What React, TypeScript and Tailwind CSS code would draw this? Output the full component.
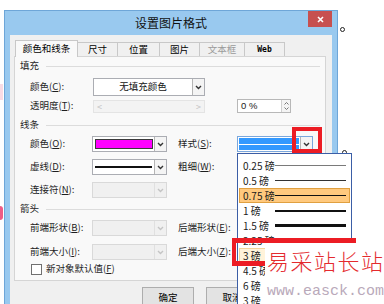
import React from 'react';

const FONT = "font-['Noto_Sans_CJK_SC',sans-serif]";

function Chev({ color = '#222' }: { color?: string }) {
  return (
    <svg width="7" height="5" viewBox="0 0 7 5">
      <path d="M1 1l2.5 2.5L6 1" fill="none" stroke={color} strokeWidth="1.4" />
    </svg>
  );
}

// label with underlined access key, e.g. 颜色(C):
function Lbl({ t, k, w, gray }: { t: string; k: string; w: string; gray?: boolean }) {
  return (
    <span className={`${w} shrink-0 whitespace-nowrap ${gray ? 'text-[#8a8a8a]' : 'text-[#1e1e1e]'}`}>
      {t}(<span className="underline">{k}</span>):
    </span>
  );
}

function Header({ t, mt }: { t: string; mt: string }) {
  return (
    <div className={`${mt} h-[14px] flex items-center pl-[5px] pr-[5px]`}>
      <span className="text-[#1e1e1e]">{t}</span>
      <div className="ml-[7px] flex-1 h-px bg-[#dcdcdc]" />
    </div>
  );
}

function ArrowBtn({ disabled }: { disabled?: boolean }) {
  return (
    <div
      className={`w-[12px] h-full border-l flex items-center justify-center ${
        disabled ? 'border-[#e0e0e0] bg-[#f0f0f0]' : 'border-[#b5b5b5] bg-[#f4f4f4]'
      }`}
    >
      <Chev color={disabled ? '#c4c4c4' : '#333'} />
    </div>
  );
}

function Disabled({ w }: { w: string }) {
  return (
    <div className={`${w} h-[16px] border border-[#d9d9d9] bg-[#f0f0f0] flex justify-end`}>
      <ArrowBtn disabled />
    </div>
  );
}

const weights = [
  { t: '0.25 磅', h: 'h-px', c: 'bg-[#7a7a7a]' },
  { t: '0.5 磅', h: 'h-px', c: 'bg-[#333]' },
  { t: '0.75 磅', h: 'h-px', c: 'bg-[#111]', sel: true },
  { t: '1 磅', h: 'h-[2px]', c: 'bg-[#111]' },
  { t: '1.5 磅', h: 'h-[3px]', c: 'bg-[#111]' },
  { t: '2.25 磅', h: 'h-[3px]', c: 'bg-[#111]' },
  { t: '3 磅', h: 'h-[4px]', c: 'bg-[#111]', cur: true },
  { t: '4.5 磅', h: 'h-[5px]', c: 'bg-[#111]' },
  { t: '6 磅', h: 'h-[6px]', c: 'bg-[#111]' },
  { t: '3 磅', h: 'h-[3px]', c: 'bg-[#111]' },
];

export default function App() {
  return (
    <div className={`${FONT} relative w-[384px] h-[304px] overflow-hidden bg-white text-[9.5px] leading-none`}>
      {/* edge of the picture behind the dialog */}
      <div className="absolute left-0 top-[84px] w-[3px] h-[16px] bg-[#f9dbe4]" />
      <div className="absolute left-0 top-[206px] w-[3px] h-[14px] rounded-r bg-[#ef5c86]" />
      <div className="absolute left-[340px] top-[27px] w-[5px] h-[5px] rounded-full border border-[#222] bg-white" />
      <div className="absolute left-[342px] top-[150px] w-[5px] h-[5px] rounded-full border border-[#222] bg-white" />

      {/* window */}
      <div className="ml-[4px] mt-[10px] w-[334px] h-[300px] bg-[#99c9ef] border border-[#6ea6d8] border-b-0 px-[5px] flex flex-col">
        <div className="relative h-[24px] flex items-center justify-center">
          <span className="text-[12px] text-[#111]">设置图片格式</span>
          <div className="absolute right-0 top-0 w-[24px] h-[16px] bg-[#c75050] flex items-center justify-center">
            <svg width="7" height="7" viewBox="0 0 7 7">
              <path d="M1 1l5 5M6 1l-5 5" stroke="#fff" strokeWidth="1.6" />
            </svg>
          </div>
        </div>

        <div className="flex-1 bg-[#f0f0f0] pl-[4px] pr-[6px] flex flex-col">
          {/* tabs */}
          <div className="mt-[5px] h-[16px] flex items-end">
            <div className="relative z-10 ml-[1px] w-[63px] h-[17px] -mb-px bg-[#f9f9f9] border border-b-0 border-[#c8c8c8] flex items-center justify-center">
              颜色和线条
            </div>
            <div className="w-[40px] h-[14px] border-t border-r border-[#c8c8c8] flex items-center justify-center">尺寸</div>
            <div className="w-[42px] h-[14px] border-t border-r border-[#c8c8c8] flex items-center justify-center">位置</div>
            <div className="w-[40px] h-[14px] border-t border-r border-[#c8c8c8] flex items-center justify-center">图片</div>
            <div className="w-[45px] h-[14px] border-t border-r border-[#c8c8c8] flex items-center justify-center text-[#9a9a9a]">文本框</div>
            <div className="w-[40px] h-[14px] border-t border-r border-[#c8c8c8] flex items-center justify-center font-['DejaVu_Sans_Mono',monospace] font-bold text-[8px]">Web</div>
          </div>

          {/* tab page */}
          <div className="h-[225px] border border-[#d5d5d5] bg-[#f9f9f9] flex flex-col">
            <Header t="填充" mt="mt-[2px]" />
            <div className="mt-[5px] h-[18px] flex items-center pl-[15px]">
              <Lbl t="颜色" k="C" w="w-[63px]" />
              <div className="w-[112px] h-[18px] border border-[#abadb3] bg-white flex">
                <span className="flex-1 flex items-center justify-center text-[#111]">无填充颜色</span>
                <ArrowBtn />
              </div>
            </div>
            <div className="mt-[3px] h-[14px] flex items-center pl-[15px]">
              <Lbl t="透明度" k="T" w="w-[63px]" />
              <div className="w-[112px] h-[13px] border border-[#e4e4e4] bg-[#f3f3f3] flex items-center justify-between px-[3px] text-[#c2c2c2] text-[9px]">
                <span>&lt;</span>
                <span>&gt;</span>
              </div>
              <div className="ml-[32px] w-[54px] h-[14px] border border-[#b8b8b8] bg-white flex">
                <span className="flex-1 flex items-center pl-[3px] text-[#222] font-['Liberation_Sans',sans-serif]">0 %</span>
                <div className="w-[9px] border-l border-[#d0d0d0] bg-[#f4f4f4] flex flex-col items-center justify-center gap-[2px]">
                  <svg width="5" height="3" viewBox="0 0 5 3"><path d="M0.5 2.5L2.5 0.5L4.5 2.5" fill="none" stroke="#777" /></svg>
                  <svg width="5" height="3" viewBox="0 0 5 3"><path d="M0.5 0.5L2.5 2.5L4.5 0.5" fill="none" stroke="#777" /></svg>
                </div>
              </div>
            </div>

            <Header t="线条" mt="mt-[5px]" />
            <div className="mt-[4px] h-[16px] flex items-center pl-[15px]">
              <Lbl t="颜色" k="O" w="w-[62px]" />
              <div className="w-[75px] h-[16px] border border-[#abadb3] bg-white flex">
                <div className="flex-1 p-[2px] pr-[1px]">
                  <div className="w-full h-full bg-[#ff00ff] border border-[#3a3a3a]" />
                </div>
                <ArrowBtn />
              </div>
              <span className="ml-[11px]" />
              <Lbl t="样式" k="S" w="w-[59px]" />
              <div className="w-[76px] h-[16px] border border-[#7aa7dc] bg-white flex">
                <div className="flex-1 p-[1px]">
                  <div className="w-full h-full bg-[#3399ff] flex items-center">
                    <div className="w-full h-px bg-white" />
                  </div>
                </div>
                <ArrowBtn />
              </div>
            </div>
            <div className="mt-[7px] h-[16px] flex items-center pl-[15px]">
              <Lbl t="虚线" k="D" w="w-[62px]" />
              <div className="w-[75px] h-[16px] border border-[#abadb3] bg-white flex">
                <div className="flex-1 flex items-center px-[2px]">
                  <div className="w-full h-[2px] bg-[#111]" />
                </div>
                <ArrowBtn />
              </div>
              <span className="ml-[11px]" />
              <Lbl t="粗细" k="W" w="w-[59px]" />
            </div>
            <div className="mt-[7px] h-[16px] flex items-center pl-[15px]">
              <Lbl t="连接符" k="N" w="w-[62px]" />
              <Disabled w="w-[75px]" />
            </div>

            <Header t="箭头" mt="mt-[4px]" />
            <div className="mt-[4px] h-[16px] flex items-center pl-[15px]">
              <Lbl t="前端形状" k="B" w="w-[62px]" />
              <Disabled w="w-[75px]" />
              <span className="ml-[11px]" />
              <Lbl t="后端形状" k="E" w="w-[59px]" />
              <Disabled w="w-[75px]" />
            </div>
            <div className="mt-[8px] h-[16px] flex items-center pl-[15px]">
              <Lbl t="前端大小" k="I" w="w-[62px]" />
              <Disabled w="w-[75px]" />
              <span className="ml-[11px]" />
              <Lbl t="后端大小" k="Z" w="w-[59px]" />
              <Disabled w="w-[75px]" />
            </div>
            <div className="mt-[3px] h-[12px] flex items-center pl-[16px]">
              <div className="w-[11px] h-[11px] border border-[#707070] bg-white" />
              <span className="ml-[4px] text-[#1e1e1e]">
                新对象默认值(<span className="underline">F</span>)
              </span>
            </div>
          </div>

          {/* buttons */}
          <div className="mt-[6px] flex gap-[12px] pl-[128px]">
            <div className="w-[52px] h-[21px] border border-[#adadad] bg-[#e3e3e3] flex items-center justify-center">确定</div>
            <div className="w-[52px] h-[21px] border border-[#adadad] bg-[#e3e3e3] flex items-center justify-center">取消</div>
          </div>
        </div>
      </div>

      {/* opened weight list */}
      <div className="absolute left-[237px] top-[153px] w-[115px] h-[170px] border border-[#3b5ea6] bg-white pt-[4px] text-[10px]">
        {weights.map((w, i) => (
          <div
            key={i}
            className={`mx-[1px] h-[15px] flex items-center pl-[3px] pr-[3px] border ${
              w.sel
                ? 'bg-[#ffc97e] border-[#e0a040]'
                : w.cur
                ? 'bg-[#fff3da] border-[#f3d39a]'
                : 'border-transparent'
            }`}
          >
            <span className="w-[32px] shrink-0 text-[#1a1a1a] whitespace-nowrap">{w.t}</span>
            <div className={`flex-1 ${w.h} ${w.c}`} />
          </div>
        ))}
      </div>

      {/* red markings */}
      <div className="absolute left-[292px] top-[127px] w-[30px] h-[26px] border-4 border-[#ec1c24]" />
      <div className="absolute left-[232px] top-[238px] w-[124px] h-[5px] bg-[#ec1c24]" />
      <div className="absolute left-[232px] top-[238px] w-[4px] h-[28px] bg-[#ec1c24]" />
      <div className="absolute left-[232px] top-[261px] w-[33px] h-[5px] bg-[#ec1c24]" />

      {/* watermark */}
      <div className="absolute left-[265px] top-[243px] right-0 bottom-0 bg-white flex flex-col pl-[2px]">
        <span className="mt-[5px] text-[22px] leading-[24px] tracking-[1.5px] font-light text-[#e42a2e] whitespace-nowrap">易采站长站</span>
        <span className="mt-[12px] font-['Liberation_Mono',monospace] text-[15px] leading-[16px] text-[#b9a9ba] whitespace-nowrap">
          www.easck.com
        </span>
      </div>
    </div>
  );
}
